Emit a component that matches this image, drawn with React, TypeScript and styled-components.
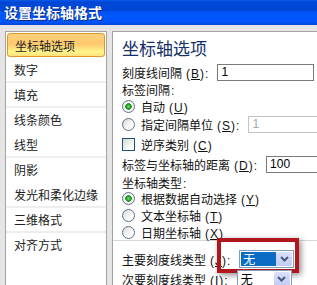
import * as React from 'react';
import styled, { createGlobalStyle } from 'styled-components';

const GlobalStyle = createGlobalStyle`
  html, body {
    margin: 0;
    padding: 0;
  }
  body {
    width: 317px;
    height: 285px;
    overflow: hidden;
    background: #e5e5e5;
    font-family: "Liberation Sans", "Noto Sans CJK SC", sans-serif;
    font-size: 12px;
    color: #111;
  }
`;

function Chevron() {
  return (
    <svg width="11" height="8" viewBox="0 0 11 8">
      <path d="M2 2 L5.5 5.5 L9 2" fill="none" stroke="#46597e" strokeWidth="2" />
    </svg>
  );
}

// label text plus its access key, e.g. 自动 (U)
function Label({ text, k, colon }: { text: string; k: string; colon?: boolean }) {
  return (
    <span>
      {text}
      <Hint>
        (<u>{k}</u>){colon ? ':' : ''}
      </Hint>
    </span>
  );
}

function App() {
  return (
    <Dialog>
      <GlobalStyle />
      <TitleBar>设置坐标轴格式</TitleBar>
      <Body>
        <Sidebar>
          <NavItem $active>坐标轴选项</NavItem>
          <NavItem $sep>数字</NavItem>
          <NavItem $sep>填充</NavItem>
          <NavItem>线条颜色</NavItem>
          <NavItem $sep>线型</NavItem>
          <NavItem>阴影</NavItem>
          <NavItem $sep>发光和柔化边缘</NavItem>
          <NavItem $sep>三维格式</NavItem>
          <NavItem>对齐方式</NavItem>
        </Sidebar>
        <Panel>
          <PanelTitle>坐标轴选项</PanelTitle>
          <Row $h={18}>
            <Label text="刻度线间隔" k="B" colon />
            <TextBox $w={97}>1</TextBox>
          </Row>
          <Row $h={17}>
            <span>
              标签间隔<Hint $tight>:</Hint>
            </span>
          </Row>
          <Row $h={17}>
            <Radio $checked />
            <Label text="自动" k="U" />
          </Row>
          <Row $h={19}>
            <Radio />
            <Label text="指定间隔单位" k="S" colon />
            <TextBox $w={90} $disabled>
              1
            </TextBox>
          </Row>
          <Row $h={20}>
            <Check />
            <Label text="逆序类别" k="C" />
          </Row>
          <Row $h={20}>
            <Label text="标签与坐标轴的距离" k="D" colon />
            <TextBox $w={80}>100</TextBox>
          </Row>
          <Row $h={16}>
            <span>
              坐标轴类型<Hint $tight>:</Hint>
            </span>
          </Row>
          <Row $h={17}>
            <Radio $checked />
            <Label text="根据数据自动选择" k="Y" />
          </Row>
          <Row $h={17}>
            <Radio />
            <Label text="文本坐标轴" k="T" />
          </Row>
          <Row $h={16}>
            <Radio />
            <Label text="日期坐标轴" k="X" />
          </Row>
          <Divider />
          <Row $h={20} $mt={8}>
            <Label text="主要刻度线类型" k="J" colon />
            <Select>
              <SelectValue $selected>无</SelectValue>
              <SelectArrow>
                <Chevron />
              </SelectArrow>
              <Callout />
            </Select>
          </Row>
          <Row $h={20}>
            <Label text="次要刻度线类型" k="I" colon />
            <Select>
              <SelectValue>无</SelectValue>
              <SelectArrow>
                <Chevron />
              </SelectArrow>
            </Select>
          </Row>
        </Panel>
      </Body>
    </Dialog>
  );
}

const Dialog = styled.div`
  display: flex;
  flex-direction: column;
  width: 317px;
  height: 285px;
  overflow: hidden;
`;

const TitleBar = styled.div`
  flex-shrink: 0;
  height: 25px;
  line-height: 25px;
  padding-left: 4px;
  color: #fff;
  font-family: "Noto Sans CJK SC", sans-serif;
  font-size: 14px;
  font-weight: bold;
  text-shadow: 1px 1px 0 #0b2a80;
  background: linear-gradient(
    to bottom,
    #0a5cec 0,
    #0047d6 2px,
    #0047d6 11px,
    #0055fc 12px,
    #0055fc 22px,
    #0046d6 25px
  );
`;

const Body = styled.div`
  flex: 1;
  display: flex;
  gap: 5px;
  padding: 6px 0 0 5px;
  min-height: 0;
`;

const Sidebar = styled.div`
  flex-shrink: 0;
  width: 100px;
  padding: 1px 0;
  background: #fff;
  border: 1px solid #a3a3a3;
  border-bottom: none;
`;

const NavItem = styled.div<{ $active?: boolean; $sep?: boolean }>`
  box-sizing: border-box;
  height: 25px;
  padding-left: 8px;
  display: flex;
  align-items: center;
  font-family: "Noto Sans CJK SC", sans-serif;
  font-size: 12px;
  color: #222;
  border-bottom: 2px solid ${(p) => (p.$sep ? '#eeeeee' : 'transparent')};
  ${(p) =>
    p.$active &&
    `
    height: 24px;
    margin: 0 1px 1px;
    padding-left: 7px;
    border: 1px solid #dc9a2e;
    border-radius: 3px;
    background: linear-gradient(to bottom, #ffd07c 0%, #ffc86e 45%, #fff48c 80%, #ffe27c 100%);
  `}
`;

const Panel = styled.div`
  flex-shrink: 0;
  width: 240px;
  padding-left: 9px;
  background: #fff;
  border: 1px solid #a3a3a3;
  border-right: none;
  border-bottom: none;
`;

const PanelTitle = styled.div`
  margin-top: 1px;
  height: 30px;
  line-height: 30px;
  font-family: "Noto Sans CJK SC", sans-serif;
  font-size: 17px;
  color: #17306a;
`;

const Row = styled.div<{ $h: number; $mt?: number }>`
  display: flex;
  align-items: center;
  gap: 6px;
  height: ${(p) => p.$h}px;
  margin-top: ${(p) => p.$mt ?? 0}px;
  white-space: nowrap;
  font-family: "Noto Sans CJK SC", sans-serif;
  font-size: 12px;
`;

const Hint = styled.span<{ $tight?: boolean }>`
  margin-left: ${(p) => (p.$tight ? 1 : 4)}px;
  font-family: "Liberation Sans", sans-serif;
  letter-spacing: 1px;

  u {
    text-underline-offset: 1px;
  }
`;

const TextBox = styled.div<{ $w: number; $disabled?: boolean }>`
  box-sizing: border-box;
  flex-shrink: 0;
  width: ${(p) => p.$w}px;
  height: 17px;
  margin-left: 2px;
  padding-left: 3px;
  line-height: 15px;
  font-family: "Liberation Sans", sans-serif;
  font-size: 12px;
  background: #fff;
  color: ${(p) => (p.$disabled ? '#a8a8a8' : '#000')};
  border: 1px solid ${(p) => (p.$disabled ? '#c4c4c4' : '#7a7a7a')};
`;

const Radio = styled.span<{ $checked?: boolean }>`
  flex-shrink: 0;
  width: 11px;
  height: 11px;
  border-radius: 50%;
  border: 1px solid #5c7288;
  background: ${(p) =>
    p.$checked
      ? 'radial-gradient(circle, #7ee07a 0, #25a625 2px, #1d8f1d 3px, #fff 3.5px, #eee 6px)'
      : 'linear-gradient(135deg, #d8d8d8, #fff 70%)'};
`;

const Check = styled.span`
  flex-shrink: 0;
  width: 11px;
  height: 11px;
  border: 1px solid #1c5180;
  background: linear-gradient(135deg, #d6d6ce, #fff 75%);
`;

const Divider = styled.div`
  height: 1px;
  margin-left: -9px;
  background: #d6d6d6;
`;

const Select = styled.div`
  position: relative;
  flex-shrink: 0;
  box-sizing: border-box;
  display: flex;
  align-items: stretch;
  width: 55px;
  height: 18px;
  margin-left: 2px;
  padding: 1px;
  background: #fff;
  border: 1px solid #7f9db9;
`;

const SelectValue = styled.div<{ $selected?: boolean }>`
  width: 33px;
  padding-left: 2px;
  line-height: 14px;
  font-family: "Noto Sans CJK SC", sans-serif;
  font-size: 12px;
  color: ${(p) => (p.$selected ? '#fff' : '#000')};
  background: ${(p) => (p.$selected ? '#0a6cc4' : 'transparent')};
`;

const SelectArrow = styled.div`
  margin-left: auto;
  width: 16px;
  display: flex;
  align-items: center;
  justify-content: center;
  background: linear-gradient(to bottom, #dbe1fb, #c1cbf5);
  border-radius: 2px;
`;

const Callout = styled.div`
  position: absolute;
  top: -13px;
  left: -23px;
  right: -6px;
  bottom: -6px;
  border: 4px solid #b0161b;
  box-shadow: 2px 2px 6px rgba(0, 0, 0, 0.45);
  pointer-events: none;
`;

export default App;
